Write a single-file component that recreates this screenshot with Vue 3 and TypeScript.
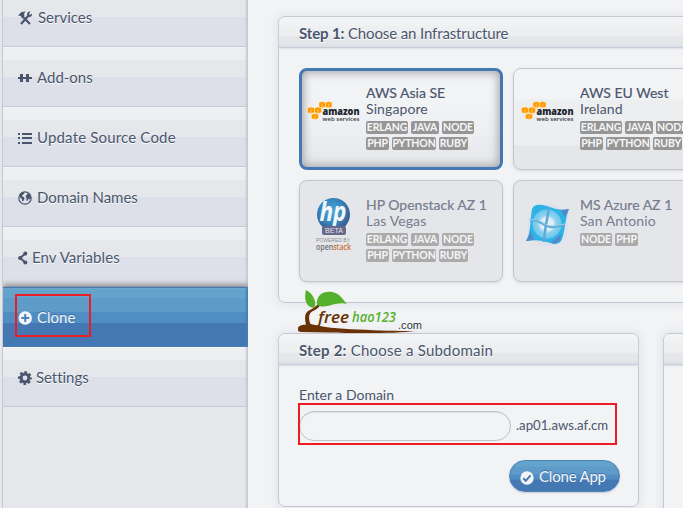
<script setup lang="ts">
interface NavItem {
  label: string
  icon: string
  gap: number
  spacing: number
}

interface Infra {
  name: string
  place: string
  logo: 'aws' | 'hp' | 'azure'
  tags: string[][]
  state: string
}

const nav: NavItem[] = [
  { label: 'Services', icon: 'tools', gap: 5, spacing: 0 },
  { label: 'Add-ons', icon: 'addons', gap: 5, spacing: 0 },
  { label: 'Update Source Code', icon: 'list', gap: 5, spacing: 0.17 },
  { label: 'Domain Names', icon: 'globe', gap: 5, spacing: 0 },
  { label: 'Env Variables', icon: 'share', gap: 4, spacing: 0.08 },
  { label: 'Clone', icon: 'plus', gap: 5, spacing: 0 },
  { label: 'Settings', icon: 'gear', gap: 4, spacing: -0.05 },
]

const full = [['ERLANG', 'JAVA', 'NODE'], ['PHP', 'PYTHON', 'RUBY']]
const infras: Infra[] = [
  { name: 'AWS Asia SE', place: 'Singapore', logo: 'aws', tags: full, state: 'selected' },
  { name: 'AWS EU West', place: 'Ireland', logo: 'aws', tags: full, state: 'ready' },
  { name: 'HP Openstack AZ 1', place: 'Las Vegas', logo: 'hp', tags: full, state: 'dim' },
  { name: 'MS Azure AZ 1', place: 'San Antonio', logo: 'azure', tags: [['NODE', 'PHP']], state: 'dim' },
]

const tagWidth: Record<string, number> = { ERLANG: 42, JAVA: 28, NODE: 32, PHP: 23, PYTHON: 44, RUBY: 29 }
</script>

<template>
  <div class="page">
    <nav class="sidebar">
      <a v-for="item in nav" :key="item.label" class="item" :class="{ active: item.label === 'Clone' }">
        <svg v-if="item.icon === 'tools'" class="ico" width="15" height="14" viewBox="0 0 15 14">
          <path d="M4 5l8 8M11 4l-8 9" stroke="currentColor" stroke-width="2.2" fill="none" />
          <path d="M0 4.500L3.500 1 7.500 .500 6 3 6.500 5 4 7.500 3 5z" fill="currentColor" />
          <path d="M14 2.500l-2 1.500-1-1 1.500-2.500C9.500.500 8.500 2.500 9.500 4.500L11 6c2 .300 3.500-1.500 3-3.500z" fill="currentColor" />
        </svg>
        <svg v-else-if="item.icon === 'addons'" class="ico" width="14" height="14" viewBox="0 0 14 14">
          <path d="M0 6h2V3h3v3h3V3h3v3h3v2h-3v3H8V8H5v3H2V8H0z" fill="currentColor" />
        </svg>
        <svg v-else-if="item.icon === 'list'" class="ico" width="14" height="14" viewBox="0 0 14 14">
          <path d="M0 2h2v2H0zM4 2h10v2H4zM0 6h2v2H0zM4 6h10v2H4zM0 11h2v2H0zM4 11h10v2H4z" fill="currentColor" />
        </svg>
        <svg v-else-if="item.icon === 'globe'" class="ico" width="14" height="14" viewBox="0 0 14 14">
          <circle cx="7" cy="7" r="6.200" fill="none" stroke="currentColor" stroke-width="1.200" />
          <path d="M1.500 4l2-2.500L6 1l.500 1.500-2 1.500L4 5.500l2 .500.500 2L5 10.500l-1-1V8L2 6.500zM8.500 4L10 2l2 2 1 3-1.500 1.500-1-1L9.500 10l-1-.500V7l-1-1.500z" fill="currentColor" />
        </svg>
        <svg v-else-if="item.icon === 'share'" class="ico" width="10" height="14" viewBox="0 0 10 14">
          <path d="M7.500 2.500L2 7l5.500 4.500" fill="none" stroke="currentColor" stroke-width="2" />
          <circle cx="7.300" cy="2.500" r="2" fill="currentColor" />
          <circle cx="2.200" cy="7" r="2.100" fill="currentColor" />
          <circle cx="7.300" cy="11.500" r="2" fill="currentColor" />
        </svg>
        <svg v-else-if="item.icon === 'plus'" class="ico" width="14" height="14" viewBox="0 0 14 14">
          <circle cx="7.250" cy="7" r="6.700" fill="currentColor" />
          <path d="M7.250 3v8M3.250 7h8" stroke="#4a83bb" stroke-width="2" />
        </svg>
        <svg v-else class="ico" width="14" height="14" viewBox="0 0 14 14">
          <circle cx="7" cy="7" r="3.900" fill="none" stroke="currentColor" stroke-width="3" />
          <circle cx="7" cy="7" r="5.800" fill="none" stroke="currentColor" stroke-width="2.200" stroke-dasharray="2.555 2" stroke-dashoffset="1.280" />
        </svg>
        <span class="label" :style="{ marginLeft: item.gap + 'px', letterSpacing: item.spacing + 'px' }">{{ item.label }}</span>
      </a>
    </nav>

    <main class="main">
      <section class="panel infra">
        <header class="head first"><b>Step 1:</b> Choose an Infrastructure</header>
        <div class="cards">
          <article v-for="infra in infras" :key="infra.name" class="card" :class="infra.state">
            <div class="logo">
              <svg v-if="infra.logo === 'aws'" width="54" height="24" viewBox="0 0 54 24">
                <g fill="#f90" stroke="#ffe9bd" stroke-width=".5">
                  <path d="M12 1.500L15.250 .500 18.500 1.500v4.500L15.250 7 12 6zM18.500 1.500L21.750 .500 25 1.500v4.500L21.750 7 18.500 6zM.500 7L4 6 7.500 7v4.500L4 12.500.500 11.500zM7.500 7L11 6 14.500 7v4.500L11 12.500 7.500 11.500zM4.500 13.500L8 12.500l3.500 1v4L8 18.500 4.500 17.500z" />
                  <path d="M15.250 2.500V7M21.750 2.500V7M4 8v4.500M11 8v4.500M8 14.500v4" />
                </g>
                <text class="amazon" x="15.500" y="13.500" textLength="37" lengthAdjust="spacingAndGlyphs">amazon</text>
                <text class="web" x="15.500" y="20" textLength="37" lengthAdjust="spacingAndGlyphs">web services</text>
              </svg>
              <svg v-else-if="infra.logo === 'hp'" width="38" height="56" viewBox="0 0 38 56">
                <defs>
                  <radialGradient id="hpBall" cx=".45" cy=".4" r=".62">
                    <stop offset="0" stop-color="#4fa9d8" />
                    <stop offset=".55" stop-color="#348ac0" />
                    <stop offset="1" stop-color="#3a528c" />
                  </radialGradient>
                </defs>
                <circle cx="18.500" cy="17.500" r="16.500" fill="url(#hpBall)" />
                <text class="hp" x="4.500" y="24" textLength="27" lengthAdjust="spacingAndGlyphs">hp</text>
                <rect x="7" y="29" width="24" height="9" rx="2" fill="#65698b" />
                <text class="beta" x="10" y="36.300" textLength="18">BETA</text>
                <text class="powered" x="1" y="44.500" textLength="34" lengthAdjust="spacingAndGlyphs">POWERED BY</text>
                <text class="stack" x="1" y="52.500" textLength="35" lengthAdjust="spacingAndGlyphs">open<tspan class="orange">stack</tspan></text>
              </svg>
              <svg v-else width="48" height="44" viewBox="0 0 48 44">
                <defs>
                  <radialGradient id="azGlow" cx=".5" cy=".5" r=".5">
                    <stop offset="0" stop-color="#f3f6fa" />
                    <stop offset=".45" stop-color="#dcebf5" />
                    <stop offset=".62" stop-color="#8ed2ee" />
                    <stop offset="1" stop-color="#6cc7ec" />
                  </radialGradient>
                </defs>
                <circle cx="24" cy="22" r="21" fill="#dce1ec" />
                <path d="M10 3c10-5 21 7 35 3-4 9-3 18-7 30-1 3-4 5-8 5-10-3-19-5-28-3 5-8 4-21 6-32z" fill="#2fb2e5" />
                <path d="M45 6l-8 1 4 7zM2 38l8-1-3-8zM27 40l10-9-1 6c-1 2-5 4-9 3z" fill="#5389c4" />
                <circle cx="23" cy="21" r="14.500" fill="url(#azGlow)" />
                <path d="M6 17c10-2 14 8 23 7 5 0 8-2 12-2M25 4c-1 10-5 24-5 35" fill="none" stroke="#5fa9d8" stroke-width="2.500" />
                <path d="M6 17c10-3 14 7 23 6 5 0 8-2 12-2" fill="none" stroke="#9bd4ee" stroke-width="1" />
              </svg>
            </div>
            <div class="info">
              <div class="name">{{ infra.name }}</div>
              <div class="place">{{ infra.place }}</div>
              <div v-for="(row, i) in infra.tags" :key="i" class="tags">
                <span v-for="t in row" :key="t" class="tag" :style="{ width: tagWidth[t] + 'px' }">{{ t }}</span>
              </div>
            </div>
          </article>
        </div>
      </section>

      <div class="row">
        <section class="panel domain">
          <header class="head second"><b>Step 2:</b> Choose a Subdomain</header>
          <div class="form">
            <label class="caption">Enter a Domain</label>
            <div class="field">
              <input class="input" type="text">
              <span class="suffix">.ap01.aws.af.cm</span>
            </div>
            <button class="button">
              <svg width="14" height="14" viewBox="0 0 14 14">
                <circle cx="7" cy="7" r="6.700" fill="#f2f3f5" />
                <path d="M3.300 7.300l2.500 2.500 4.700-5.500" fill="none" stroke="#4478b3" stroke-width="2" />
              </svg>
              <span>Clone App</span>
            </button>
          </div>
        </section>
        <section class="panel side">
          <header class="head"></header>
        </section>
      </div>
    </main>

    <svg class="brand" width="128" height="46" viewBox="0 0 128 46">
      <path d="M0 39c1-3 5-3 8-3.500C6 28 7 23 12 21c4-2 6-4 8-6l2 1.500c-2 4-8 5-10 8-1.500 3-1 7 .500 10.500C24 38 40 40 60 40.500c20 1 40 1.500 56 1.500-14 2.500-60 2.500-85 1.500L3 43c-3 0-3.500-2-3-4z" fill="#693104" />
      <path d="M8 1c8 4 11 13 8 18C7 18 6 9 8 1z" fill="#55b12c" />
      <path d="M19 16C18 6 25 2 34 3c8 1 11 8 15 12-12-3-21 6-30 1z" fill="#55b12c" />
      <text class="free" x="20" y="33.500" textLength="31" lengthAdjust="spacingAndGlyphs">free</text>
      <text class="hao" x="54" y="33" textLength="44" lengthAdjust="spacingAndGlyphs">hao123</text>
      <text class="com" x="100" y="39.500" textLength="24">.com</text>
    </svg>
    <div class="mark mark-nav"></div>
    <div class="mark mark-field"></div>
  </div>
</template>

<style>
body {
  margin: 0;
  overflow: hidden;
}
</style>

<style scoped>
.page {
  position: relative;
  display: flex;
  width: 683px;
  height: 508px;
  overflow: hidden;
  background: #f2f3f5;
  color: #4a566d;
  font-family: Lato, "Liberation Sans", sans-serif;
  font-size: 15px;
}

.sidebar {
  box-sizing: border-box;
  display: flex;
  flex: none;
  flex-direction: column;
  width: 248px;
  height: 508px;
  padding-left: 2px;
  background: linear-gradient(90deg, #e5e7eb 2px, #c5c8d0 2px, #c5c8d0 3px, transparent 3px, transparent 245px, #d0d3db 246px, #c8cad1 248px), #e5e7eb;
}

.item {
  box-sizing: border-box;
  display: flex;
  flex: none;
  align-items: center;
  height: 60px;
  margin-left: 1px;
  padding-left: 15px;
  border-bottom: 1px solid #c7cad2;
  background: linear-gradient(#f6f6f8 1px, #eeeff1 1px, #eeeff1 13px, #e6e7ea 13px, #e6e7ea 30px, #dde0e8 30px);
  box-shadow: inset -3px 0 2px -1px #c5c8d0;
  text-shadow: 0 1px 0 #fff;
}

.item:first-child {
  margin-top: -13px;
}

.ico {
  margin-top: 3px;
}

.item .label {
  padding-top: 1px;
  line-height: 20px;
}

.item.active {
  position: relative;
  border-bottom-color: #477eb8;
  background: linear-gradient(#4279b4 1px, #76acd4 1px, #64a4cc 2px, #64a4cc 11px, #5f9bc8 11px, #5f9bc8 25px, #508dc2 25px, #508dc2 36px, #4478b3 36px);
  box-shadow: 0 -3px 5px rgba(80, 80, 80, .5), inset -3px 0 2px -1px #477db6;
  clip-path: inset(-8px 0 0 0);
  color: #f3f5f8;
  text-shadow: 0 -1px 0 #3c6ea5;
}

.main {
  display: flex;
  flex: none;
  flex-direction: column;
  gap: 30px;
  width: 600px;
  padding: 16px 0 0 30px;
}

.panel {
  box-sizing: border-box;
  flex: none;
  border: 1px solid #c5c8d0;
  border-radius: 7px;
  background: #f2f3f5;
  box-shadow: 0 0 6px 3px #e6e8ed;
}

.infra {
  height: 287px;
}

.head {
  box-sizing: border-box;
  height: 31px;
  padding-left: 20px;
  border-bottom: 1px solid #c9ccd5;
  border-radius: 6px 6px 0 0;
  background: linear-gradient(#f2f3f5 7px, #eeeff1 10px, #eeeff1 18px, #e5e6e9 20px, #e5e6e9 27px, #dde0e8 28px);
  box-shadow: 0 1px 2px #dcdee5;
  line-height: 32px;
  white-space: nowrap;
  text-shadow: 0 1px 0 #fff;
}

.head.first {
  letter-spacing: -.13px;
}

.head.second {
  letter-spacing: .22px;
}

.head b {
  font-weight: 700;
}

.cards {
  display: grid;
  grid-template-columns: 204px 204px;
  grid-auto-rows: 102px;
  gap: 10px;
  padding: 20px 0 0 20px;
}

.card {
  box-sizing: border-box;
  display: flex;
  gap: 6px;
  padding: 16px 0 0 7px;
  border: 1px solid #c4c6cd;
  border-radius: 8px;
  background: #e5e6ea;
  box-shadow: 0 1px 3px #d5d8e0;
}

.card.ready {
  background: linear-gradient(#f2f3f5 30px, #edeef0 31px, #edeef0 76px, #e5e6ea 77px);
}

.card.selected {
  padding: 14px 0 0 5px;
  border: 3px solid #4478b3;
  background: linear-gradient(#f2f3f5 30px, #eeeff2 60px, #e5e6ea);
  box-shadow: inset 0 0 9px 2px #a9aaae;
}

.logo {
  display: flex;
  flex: none;
  justify-content: center;
  width: 53px;
}

.card .logo svg {
  flex: none;
  margin-top: 16px;
}

.card.dim .logo svg {
  margin-top: 0;
}

.card.dim:last-child .logo svg {
  margin-top: 6px;
}

.info {
  white-space: nowrap;
  font-size: 14px;
}

.name {
  height: 16px;
  line-height: 16px;
  -webkit-text-stroke: .2px currentColor;
}

.place {
  height: 16px;
  letter-spacing: .1px;
  line-height: 16px;
}

.tags {
  display: flex;
  gap: 3px;
  height: 13px;
  margin-top: 3px;
}

.place + .tags {
  margin-top: 4px;
}

.tag {
  border-radius: 2px;
  background: #969696;
  color: #f6f6f6;
  font-size: 10.5px;
  font-weight: 700;
  letter-spacing: -.15px;
  line-height: 13px;
  text-align: center;
}

.dim .name,
.dim .place {
  color: #777c8e;
}

.dim .tag {
  background: #ababab;
}

.amazon {
  fill: #20242c;
  font: 800 10.5px "Open Sans", sans-serif;
}

.web {
  fill: #353941;
  font: 600 6px "Open Sans", sans-serif;
}

.hp {
  fill: #f5f6fa;
  font: italic 700 27px "Open Sans", sans-serif;
}

.beta {
  fill: #e4e5ea;
  font: 7px "Liberation Sans", sans-serif;
}

.powered {
  fill: #8b8e98;
  font: 5.5px "Liberation Sans", sans-serif;
}

.stack {
  fill: #6f7076;
  font: 600 8.5px "Open Sans", sans-serif;
}

.orange {
  fill: #c56f35;
}

.row {
  display: flex;
  gap: 24px;
}

.domain {
  width: 361px;
  height: 174px;
}

.side {
  width: 100px;
  height: 200px;
}

.form {
  display: flex;
  flex-direction: column;
  align-items: flex-start;
  padding: 20px 18px 0 20px;
}

.caption {
  height: 20px;
  font-size: 14px;
  line-height: 20px;
}

.field {
  display: flex;
  align-items: center;
  gap: 5px;
  height: 30px;
  margin-top: 6px;
}

.input {
  box-sizing: border-box;
  width: 212px;
  height: 30px;
  border: 1px solid #c0c3c9;
  border-radius: 15px;
  outline: none;
  background: #f2f3f5;
  box-shadow: inset 0 1px 1px #dddfe4;
}

.suffix {
  margin-top: -2px;
  font-size: 13.2px;
}

.button {
  box-sizing: border-box;
  display: flex;
  align-items: center;
  align-self: flex-end;
  gap: 5px;
  width: 111px;
  height: 32px;
  margin-top: 19px;
  padding: 0 0 0 10px;
  border: 1px solid #4a82ba;
  border-radius: 16px;
  background: linear-gradient(#64a4cc 5px, #5f9bc8 6px, #5f9bc8 13px, #508dc2 14px, #508dc2 18px, #4478b3 19px);
  box-shadow: 0 1px 2px #c5cad5;
  color: #f2f3f5;
  font: inherit;
  letter-spacing: -.2px;
  text-shadow: 0 -1px 0 #3c6ea5;
  white-space: nowrap;
}

.button svg {
  margin-top: 4px;
}

.brand {
  position: absolute;
  top: 289px;
  left: 298px;
}

.free {
  fill: #693104;
  font: italic 600 17px "Open Sans", sans-serif;
}

.hao {
  fill: #55b12c;
  font: italic 600 15px "Open Sans", sans-serif;
}

.com {
  fill: #303440;
  font: 11px "Liberation Sans", sans-serif;
}

.mark {
  position: absolute;
  box-sizing: border-box;
  border: 2px solid #ed1c24;
}

.mark-nav {
  top: 294px;
  left: 15px;
  width: 76px;
  height: 43px;
}

.mark-field {
  top: 403px;
  left: 298px;
  width: 319px;
  height: 42px;
}
</style>
